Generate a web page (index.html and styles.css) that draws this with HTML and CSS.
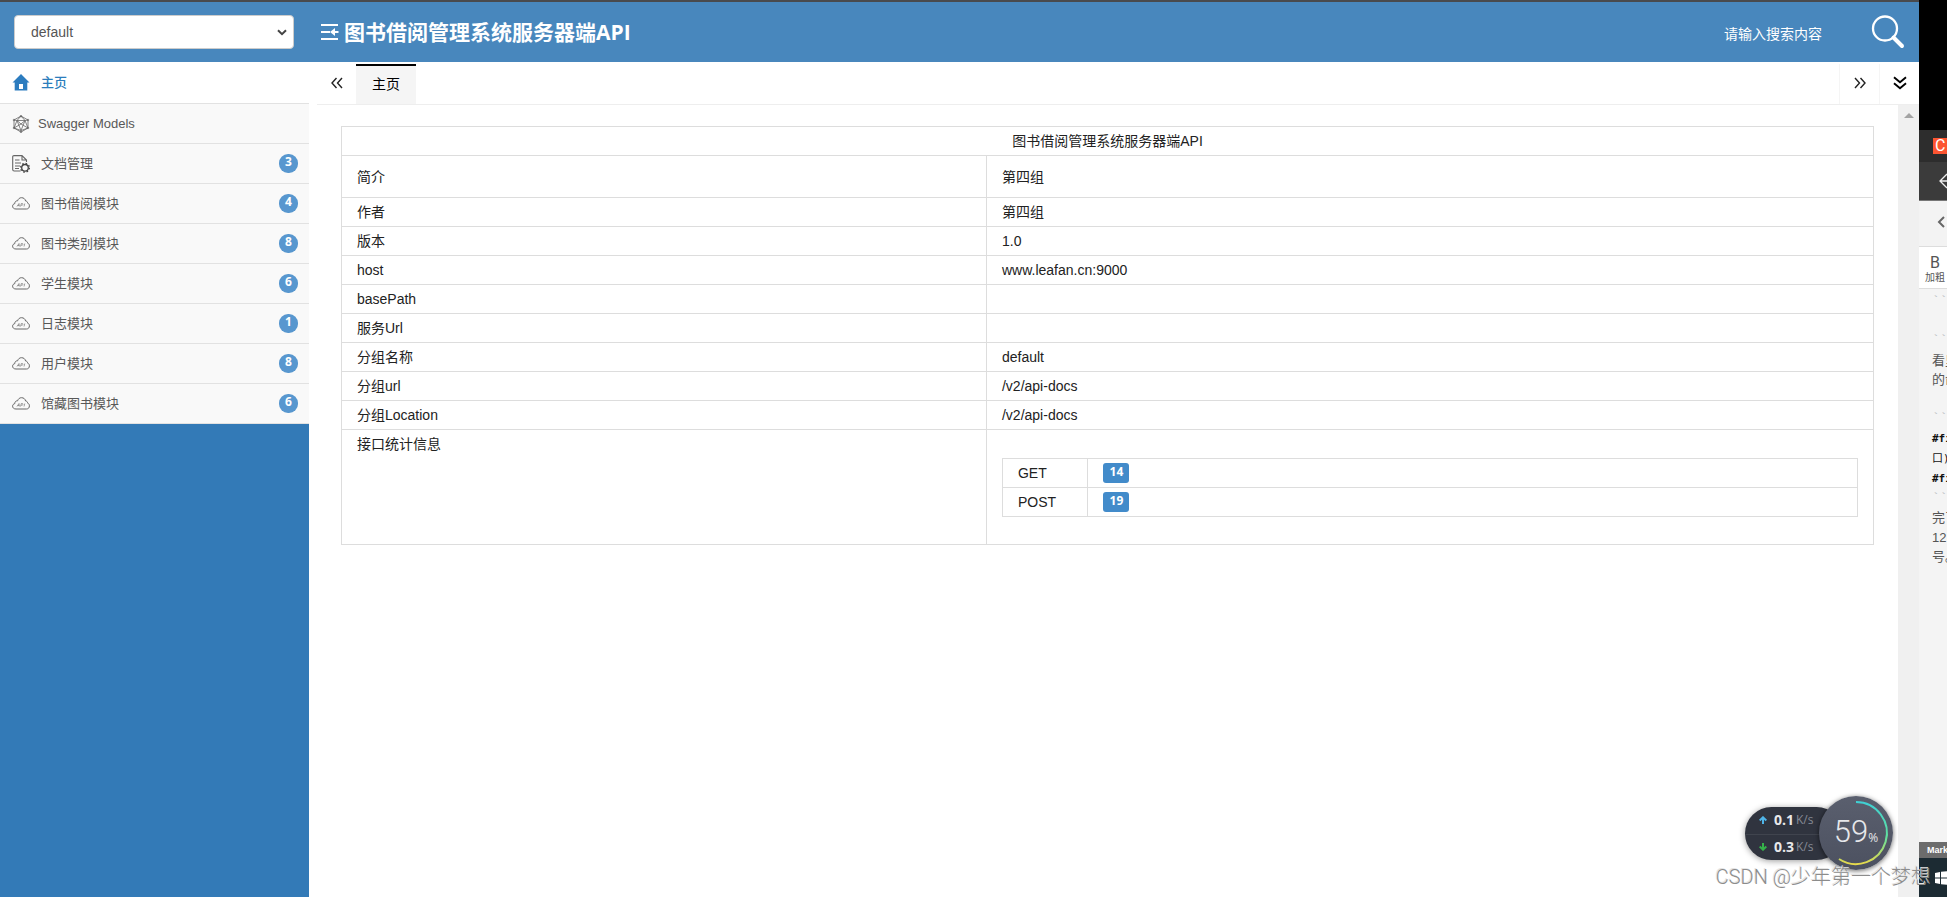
FILE: index.html
```html
<!DOCTYPE html>
<html lang="zh-CN">
<head>
<meta charset="utf-8">
<title>图书借阅管理系统服务器端API</title>
<link rel="stylesheet" href="styles.css">
</head>
<body>
<svg class="defs" width="0" height="0" aria-hidden="true">
  <symbol id="cloud" viewBox="0 0 18 18">
    <path d="M4 14C1.700 14 .6 12.700.6 11.200c0-1.400.9-2.300 2.200-2.600C2.800 6.700 4 5.700 5.600 5.800 6.300 3.700 7.700 2.700 9.500 2.700c2.200 0 3.700 1.300 4.100 3.300 1.300.1 2 .9 2 2.100 1.200.4 1.800 1.400 1.800 2.700C17.400 12.900 16.200 14 14.400 14z" fill="none" stroke="#666" stroke-width="1"/>
    <path d="M5 11.500l2-3 .3 3M5.800 10.500h1.400M8.500 11.500l.8-3h1c1.200 0 .9 1.700-.5 1.700h-.8M12 11.500l.8-3" fill="none" stroke="#777" stroke-width=".7"/>
  </symbol>
</svg>
<div class="screen">
  <div class="app">
    <header class="header">
      <div class="group">
        <select class="group-select" aria-label="分组"><option>default</option></select>
        <svg class="chevron" viewBox="0 0 10 7"><path d="M1 1.200l4 4 4-4" fill="none" stroke="#444" stroke-width="2"/></svg>
      </div>
      <button class="icon-button fold" type="button" aria-label="收起菜单">
        <svg width="18" height="18" viewBox="0 0 18 18"><path d="M0 2h17M0 9h9M0 16h17" stroke="#fff" stroke-width="2"/><path d="M9 9l5-4v3h3.500v2H14v3z" fill="#fff"/></svg>
      </button>
      <h1 class="title">图书借阅管理系统服务器端API</h1>
      <input class="search" type="text" placeholder="请输入搜索内容" aria-label="搜索">
      <button class="icon-button find" type="button" aria-label="搜索">
        <svg width="34" height="34" viewBox="0 0 34 34" fill="none" stroke="#fff"><circle cx="14" cy="13.500" r="12" stroke-width="2.300"/><path d="M22.500 22.500l8.500 8.500" stroke-width="4" stroke-linecap="round"/></svg>
      </button>
    </header>
    <div class="body">
      <nav class="sidebar">
        <ul class="menu">
          <li><a class="item active" href="#home"><svg class="icon" viewBox="0 0 18 18"><path d="M9 0l8.500 8.500h-2.200V16.500H2.700V8.500H.5zM7 10v5h4v-5z" fill="#2c7cbf" fill-rule="evenodd"/></svg><span class="label">主页</span></a></li>
          <li><a class="item models" href="#models"><svg class="icon" viewBox="0 0 18 18" fill="none" stroke="#666" stroke-width=".8"><path d="M9 1l7 4v8l-7 4-7-4V5zM9 1L5 5.500 2 13l7 2.500L16 13l-3-7.500zM2 5l3 .5h8L16 5M5 5.500l4 10 4-10M5 5.500L9 9l4-3.500M9 9l7 4M9 9l-7 4"/><circle cx="9" cy="1.200" r=".8"/><circle cx="2" cy="5" r=".8"/><circle cx="16" cy="5" r=".8"/><circle cx="2" cy="13" r=".8"/><circle cx="16" cy="13" r=".8"/><circle cx="9" cy="16.800" r=".8"/></svg><span class="label">Swagger Models</span></a></li>
          <li><a class="item" href="#docs"><svg class="icon" viewBox="0 0 18 18" fill="none" stroke="#666" stroke-width="1.100"><path d="M8.500 16H2.200Q.7 16 .7 14.500V1.600Q.7.600 2 .6H10l4.500 4.500V7M10 .6V5h4.500M3 5h4.500M3 8h6M3 11h5M3 13.500h4"/><circle cx="13" cy="12.800" r="3.300" stroke="#444" stroke-width="1.300"/><circle cx="13" cy="12.800" r="4.400" stroke="#444" stroke-width="1.200" stroke-dasharray="1.600 1.856"/></svg><span class="label">文档管理</span><span class="count">3</span></a></li>
          <li><a class="item" href="#borrow"><svg class="icon"><use href="#cloud"/></svg><span class="label">图书借阅模块</span><span class="count">4</span></a></li>
          <li><a class="item" href="#category"><svg class="icon"><use href="#cloud"/></svg><span class="label">图书类别模块</span><span class="count">8</span></a></li>
          <li><a class="item" href="#student"><svg class="icon"><use href="#cloud"/></svg><span class="label">学生模块</span><span class="count">6</span></a></li>
          <li><a class="item" href="#log"><svg class="icon"><use href="#cloud"/></svg><span class="label">日志模块</span><span class="count">1</span></a></li>
          <li><a class="item" href="#user"><svg class="icon"><use href="#cloud"/></svg><span class="label">用户模块</span><span class="count">8</span></a></li>
          <li><a class="item" href="#collection"><svg class="icon"><use href="#cloud"/></svg><span class="label">馆藏图书模块</span><span class="count">6</span></a></li>
        </ul>
      </nav>
      <main class="main">
        <div class="tabs">
          <button class="tab-nav prev" type="button" aria-label="向左"><svg width="12" height="12" viewBox="0 0 12 12" fill="none" stroke="#222" stroke-width="1.400"><path d="M5.500 1l-4.500 5 4.500 5M11 1L6.500 6l4.500 5"/></svg></button>
          <button class="tab" type="button">主页</button>
          <span class="spacer"></span>
          <button class="tab-nav" type="button" aria-label="向右"><svg width="12" height="12" viewBox="0 0 12 12" fill="none" stroke="#222" stroke-width="1.400"><path d="M1 1l4.500 5L1 11M6.500 1L11 6l-4.500 5"/></svg></button>
          <button class="tab-nav" type="button" aria-label="更多"><svg width="14" height="14" viewBox="0 0 14 14" fill="none" stroke="#000" stroke-width="1.900"><path d="M1 1.200l6 5 6-5M1 7.200l6 5 6-5"/></svg></button>
        </div>
        <div class="pane">
          <div class="content">
            <table class="info">
              <colgroup><col class="key"><col></colgroup>
              <thead><tr><th colspan="2">图书借阅管理系统服务器端API</th></tr></thead>
              <tbody>
                <tr class="intro"><td>简介</td><td>第四组</td></tr>
                <tr><td>作者</td><td>第四组</td></tr>
                <tr><td>版本</td><td>1.0</td></tr>
                <tr><td>host</td><td>www.leafan.cn:9000</td></tr>
                <tr><td>basePath</td><td></td></tr>
                <tr><td>服务Url</td><td></td></tr>
                <tr><td>分组名称</td><td>default</td></tr>
                <tr><td>分组url</td><td>/v2/api-docs</td></tr>
                <tr><td>分组Location</td><td>/v2/api-docs</td></tr>
                <tr><td>接口统计信息</td><td class="stats">
                  <table class="info">
                    <colgroup><col class="method"><col></colgroup>
                    <tbody>
                      <tr><td>GET</td><td><span class="tag">14</span></td></tr>
                      <tr><td>POST</td><td><span class="tag">19</span></td></tr>
                    </tbody>
                  </table>
                </td></tr>
              </tbody>
            </table>
          </div>
          <div class="scrollbar"><svg width="10" height="5" viewBox="0 0 10 5"><path d="M0 5l5-5 5 5z" fill="#a3a3a3"/></svg></div>
        </div>
      </main>
    </div>
  </div>
  <aside class="behind">
    <div class="b-black"></div>
    <div class="b-title"><span class="b-logo">C</span></div>
    <div class="b-nav"><svg width="14" height="16" viewBox="0 0 14 16" fill="none" stroke="#eee" stroke-width="1.300"><path d="M8 1L1 8l7 7M1 8h13"/></svg></div>
    <div class="b-back"><svg width="8" height="12" viewBox="0 0 8 12" fill="none" stroke="#666" stroke-width="2"><path d="M7 1L2 6l5 5"/></svg></div>
    <div class="b-tool"><span class="b-bold">B</span><span>加粗</span></div>
    <div class="b-text">
      <p class="tick">```</p><p>&nbsp;</p><p class="tick">```</p><p>看里</p><p>的命</p><p>&nbsp;</p><p class="tick">```</p><p><code>#fi</code></p><p><code class="plain">口)</code></p><p><code>#fi</code></p><p class="tick">```</p><p>完了</p><p>12.</p><p>号。</p>
    </div>
    <div class="b-mark">Mark</div>
    <div class="b-task"><svg width="16" height="14" viewBox="0 0 16 14" fill="#fff"><path d="M0 2l5-1v5.500H0zM6 .8L16 0v6.500H6zM0 7.500h5V13l-5-1zM6 7.500h10V14L6 13.200z"/></svg></div>
  </aside>
  <div class="meter">
    <div class="speeds">
      <div class="speed"><svg width="8" height="8" viewBox="0 0 8 8" fill="none" stroke="#4fb4e8" stroke-width="2"><path d="M4 8V1.500M.7 4.500L4 1.300l3.300 3.200"/></svg><b>0.1</b><span>K/s</span></div>
      <div class="speed"><svg width="8" height="8" viewBox="0 0 8 8" fill="none" stroke="#35b24a" stroke-width="2"><path d="M4 0v6.500M.7 3.500L4 6.700l3.300-3.200"/></svg><b>0.3</b><span>K/s</span></div>
    </div>
    <div class="gauge">
      <svg class="ring" viewBox="0 0 74 74" fill="none"><defs><linearGradient id="arc" x1="0" y1="0" x2="0" y2="1"><stop offset="0" stop-color="#3fd0d4"/><stop offset=".55" stop-color="#5fe0a0"/><stop offset="1" stop-color="#e6d94c"/></linearGradient></defs><path d="M37 6a31 31 0 1 1-17 57" stroke="url(#arc)" stroke-width="2"/></svg>
      <span class="percent">59</span><span class="unit">%</span>
    </div>
  </div>
  <div class="watermark">CSDN @少年第一个梦想</div>
</div>
</body>
</html>
```

FILE: styles.css
```css
* { box-sizing: border-box; }
body {
  margin: 0;
  font: 14px/20px "Liberation Sans", "Noto Sans CJK SC", sans-serif;
  color: #222;
}
button, input, select { font: inherit; }
button { border: 0; padding: 0; background: none; cursor: pointer; }
svg { display: block; }
.defs { position: absolute; }

.screen { position: relative; display: flex; min-height: 100vh; overflow: hidden; background: #fff; }
.app { flex: 1; min-width: 0; display: flex; flex-direction: column; border-top: 2px solid #494a4d; }

.header { display: flex; align-items: center; height: 60px; padding: 0 14px; background: #4887bd; }
.group { position: relative; width: 280px; }
.group-select {
  display: block; width: 100%; height: 34px; padding: 0 16px;
  border: 1px solid #ccc; border-radius: 4px;
  background: #fff; color: #555; appearance: none;
}
.chevron { position: absolute; right: 7px; top: 14px; width: 10px; height: 7px; }
.fold { margin-left: 27px; }
.title { margin: 0 auto 0 5px; font-size: 21px; line-height: 32px; font-weight: bold; color: #fff; font-family: "Open Sans", "Noto Sans CJK SC", sans-serif; }
.search { width: 134px; height: 34px; margin-right: 13px; padding: 4px 0 0; border: 0; background: transparent; color: #fff; outline: 0; }
.search::placeholder { color: #fff; opacity: 1; }

.body { flex: 1; display: flex; gap: 8px; }
.sidebar { width: 309px; flex: none; background: #337ab7; }
.menu { margin: 0; padding: 0; list-style: none; }
.item {
  display: flex; align-items: center; gap: 11px; height: 40px; padding: 0 11px 0 12px;
  border-bottom: 1px solid #e2e2e2; background: #f9f9f9;
  color: #585858; font-size: 13px; text-decoration: none;
}
.item.active { height: 42px; background: #fff; color: #2b7dbc; font-weight: 500; }
.item.models { gap: 8px; }
.icon { width: 18px; height: 18px; flex: none; }
.label { flex: 1; padding-top: 1px; }
.count {
  width: 19px; height: 19px; border-radius: 9px; background: #5897cf; color: #fff;
  font: bold 12px/16px "Open Sans", sans-serif; text-align: center;
}

.main { flex: 1; min-width: 0; display: flex; flex-direction: column; }
.tabs { display: flex; height: 43px; padding-top: 2px; border-bottom: 1px solid #eee; }
.tab { width: 60px; padding-bottom: 2px; border-top: 2px solid #000; background: #f5f5f5; color: #000; }
.spacer { flex: 1; }
.tab-nav { display: flex; width: 40px; align-items: center; justify-content: center; border-left: 1px solid #f5f5f5; padding-bottom: 2px; }
.tab-nav.prev { width: 39px; border-left: 0; }
.pane { flex: 1; display: flex; }
.content { flex: 1; min-width: 0; padding: 21px 24px; }
.scrollbar { width: 21px; padding: 8px 6px; background: #f0f0f0; }

.info { width: 100%; border-collapse: collapse; table-layout: fixed; }
.info th, .info td { height: 29px; padding: 4px 15px; border: 1px solid #ddd; text-align: left; vertical-align: top; font-weight: normal; }
.info th { text-align: center; }
.info .key { width: 42.1%; }
.info .method { width: 10%; }
.info .intro td { height: 42px; vertical-align: middle; }
.info .stats { padding: 28px 15px 27px; }
.tag {
  display: block; width: 26px; height: 20px; border-radius: 3px; background: #428bca; color: #fff;
  font: bold 12px/18px "Open Sans", sans-serif; text-align: center;
}

.behind { width: 28px; flex: none; display: flex; flex-direction: column; overflow: hidden; background: #f4f4f4; }
.behind > div { flex: none; }
.b-black { height: 130px; background: #000; }
.b-title { height: 32px; padding: 8px 0 0 14px; background: #2d2d2d; }
.b-logo { display: block; width: 20px; height: 16px; padding-left: 2px; background: #fc5531; color: #fff; font: 16px/16px Roboto, sans-serif; }
.b-nav { height: 39px; padding: 11px 0 0 20px; background: #3b3b3b; border-bottom: 1px solid #777; }
.b-back { height: 45px; padding: 15px 0 0 18px; background: #f3f3f3; }
.b-tool { display: flex; flex-direction: column; height: 43px; padding: 8px 0 0 6px; border: 1px solid #ddd; border-width: 1px 0; background: #fff; color: #555; font-size: 10px; line-height: 14px; white-space: nowrap; }
.b-bold { padding-left: 5px; font: 16px/16px Roboto, sans-serif; }
.b-text { padding: 3px 0 0 13px; font-size: 13px; line-height: 1.5; color: #555; white-space: nowrap; }
.b-text p { margin: 0; }
.b-text .tick { color: #b4babd; font-family: "Liberation Mono", monospace; }
.b-text code { display: block; font-family: "DejaVu Sans Mono", "Noto Sans CJK SC", monospace; font-size: 11px; line-height: 20px; font-weight: bold; color: #111; }
.b-text .plain { font-weight: normal; }
.b-mark { height: 16px; padding-left: 8px; background: #6c6c6c; color: #fff; font: bold 9px/16px "Liberation Sans", sans-serif; }
.b-text { flex-grow: 1 !important; }
.b-task { height: 39px; padding: 13px 0 0 16px; background: #1c2b33; }

.meter { position: absolute; right: 54px; bottom: 27px; display: flex; align-items: center; }
.speeds { width: 98px; height: 53px; margin-right: -24px; border-radius: 27px; background: #30343f; box-shadow: 0 1px 6px rgba(0, 0, 0, .4); }
.speed { display: flex; align-items: center; gap: 2px; height: 27px; padding-left: 14px; font: 12px/18px "Open Sans", sans-serif; color: #858994; }
.speed + .speed { height: 26px; border-top: 1px solid #40444e; }
.speed b { margin-left: 5px; font-size: 14px; color: #e8e8ea; }
.gauge { position: relative; display: flex; align-items: baseline; justify-content: center; width: 74px; height: 74px; border-radius: 50%; background: linear-gradient(#5a5f6e, #4c5160); box-shadow: 0 1px 5px rgba(0, 0, 0, .6); color: #e6e7ea; }
.ring { position: absolute; inset: 0; }
.percent { font: 300 31px/72px Roboto, sans-serif; }
.unit { font: 12px/20px "Open Sans", sans-serif; }

.watermark { position: absolute; right: 16px; bottom: 6px; font: 300 20px/28px Roboto, "Noto Sans CJK SC", sans-serif; color: #8c8c8c; text-shadow: -1px -1px 0 #e4e4e4; white-space: nowrap; }
```
